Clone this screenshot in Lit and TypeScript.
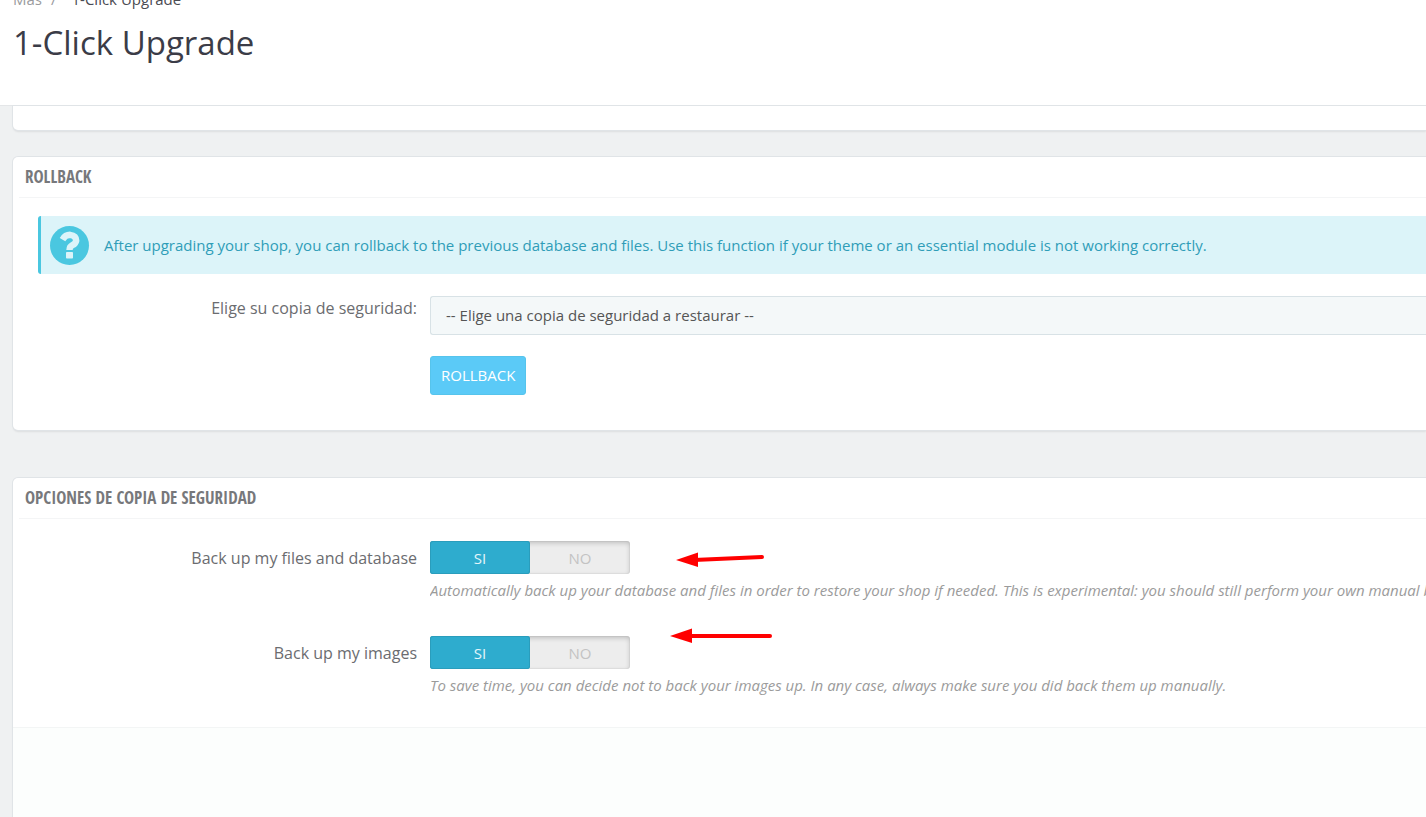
import { LitElement, html, css, svg } from "lit";
import { customElement, property } from "lit/decorators.js";

@customElement("yes-no-switch")
class YesNoSwitch extends LitElement {
  @property() name = "";
  @property() legend = "";

  static styles = css`
    :host {
      display: block;
    }
    .switch {
      box-sizing: border-box;
      display: grid;
      grid-template-columns: 1fr 1fr;
      width: 200px;
      height: 33px;
      margin: 0;
      padding: 0;
      border: 0;
      border-radius: 3px;
      background: #ededed;
      box-shadow: inset 0 2px 5px rgba(0, 0, 0, 0.2), inset 0 0 0 1px rgba(0, 0, 0, 0.03);
    }
    .sr {
      position: absolute;
      width: 1px;
      height: 1px;
      margin: 0;
      opacity: 0;
      overflow: hidden;
    }
    .option {
      display: flex;
      align-items: center;
      justify-content: center;
      border-radius: 3px;
      color: #c3c3c3;
      font-size: 15px;
      line-height: 20px;
      cursor: pointer;
    }
    .option:has(:checked) {
      background: #2eacce;
      color: #e4f5fa;
      box-shadow: inset 0 0 0 1px #2a9dbc;
    }
  `;

  render() {
    return html`
      <fieldset class="switch" aria-label=${this.legend}>
        <label class="option"><input class="sr" type="radio" name=${this.name} value="1" checked />SI</label>
        <label class="option"><input class="sr" type="radio" name=${this.name} value="0" />NO</label>
      </fieldset>
    `;
  }
}

@customElement("app-root")
class AppRoot extends LitElement {
  static styles = css`
    :host {
      display: flex;
      flex-direction: column;
      height: 100vh;
      overflow: hidden;
      background: #eff1f2;
      color: #6b6c70;
      font-family: "Open Sans", "Noto Sans", sans-serif;
      font-size: 16px;
      line-height: 24px;
    }
    .header {
      flex: none;
      padding: 0 13px 38px;
      border-bottom: 1px solid #e4e6e8;
      background: #fff;
    }
    .crumbs {
      display: flex;
      gap: 9px;
      margin-top: -11px;
      font-size: 15px;
      line-height: 20px;
      color: #9a9b9e;
    }
    .crumbs a {
      color: inherit;
      text-decoration: none;
    }
    .current {
      margin-left: 6px;
      color: #4a4b52;
    }
    .title {
      margin: 10px 0 0;
      color: #3b3c47;
      font-size: 33px;
      font-weight: 400;
      line-height: 48px;
    }
    .main {
      flex: 1;
      display: flex;
      flex-direction: column;
      padding-left: 13px;
      min-height: 0;
    }
    .panel {
      flex: none;
      border-radius: 5px 0 0 5px;
      background: #fff;
      box-shadow: 0 0 0 1px #e0e4e7, 0 2px 2px rgba(0, 0, 0, 0.08);
    }
    .previous {
      height: 24px;
      border-radius: 0 0 0 5px;
      margin-bottom: 27px;
    }
    .rollback {
      padding-bottom: 35px;
      margin-bottom: 48px;
    }
    .options {
      flex: 1 0 auto;
      display: flex;
      flex-direction: column;
      border-radius: 5px 0 0 0;
    }
    .heading {
      margin: 0 0 0 6px;
      padding: 8px 6px 9px;
      border-bottom: 1px solid #f4f5f6;
      color: #77787b;
      font-family: "Open Sans Condensed", "Open Sans", sans-serif;
      font-size: 17px;
      font-weight: 300;
      line-height: 23px;
    }
    .alert {
      display: flex;
      align-items: center;
      gap: 14px;
      box-sizing: border-box;
      min-height: 58px;
      margin: 18px 0 22px 25px;
      padding: 9px;
      border-left: 3px solid #4ac7e0;
      border-radius: 3px 0 0 3px;
      background: #dcf4f9;
      color: #2f9db8;
      font-size: 15px;
    }
    .question {
      flex: none;
      width: 40px;
      height: 40px;
    }
    .text {
      margin: 0;
    }
    .row {
      display: grid;
      grid-template-columns: 404px minmax(0, 1fr);
      column-gap: 13px;
    }
    .label {
      text-align: right;
    }
    .select {
      appearance: none;
      display: block;
      box-sizing: border-box;
      width: 100%;
      height: 39px;
      padding: 0 15px 2px;
      border: 1px solid #d8e2e6;
      border-right: 0;
      border-radius: 3px 0 0 3px;
      background: #f4f8f9;
      color: #555;
      font: inherit;
      font-size: 15px;
    }
    .button {
      height: 39px;
      margin-top: 21px;
      padding: 0 10px 2px;
      border: 1px solid #56c4ec;
      border-radius: 3px;
      background: #5bcaf7;
      color: #fff;
      font: inherit;
      font-size: 15px;
    }
    .field {
      position: relative;
      grid-column: 2;
    }
    .setting {
      margin-top: 22px;
    }
    .setting + .setting {
      margin-top: 34px;
    }
    .setting .label {
      padding-top: 5px;
    }
    .help {
      margin: 5px 0 0;
      color: #9b9b9b;
      font-size: 15px;
      font-style: italic;
      line-height: 23px;
      white-space: nowrap;
      overflow: hidden;
    }
    .arrow {
      position: absolute;
      top: -11px;
      left: 240px;
      width: 110px;
      height: 44px;
    }
    .footer {
      flex: 1;
      margin-top: 30px;
      border-top: 1px solid #f3f5f5;
      background: #fcfefd;
    }
    @media (max-width: 900px) {
      .row {
        grid-template-columns: 160px minmax(0, 1fr);
      }
    }
  `;

  private arrow(tip: number[], end: number[]) {
    const [x, y] = tip;
    return html`<svg class="arrow" viewBox="0 0 110 44" aria-hidden="true">
      ${svg`<path d="M${x + 18} ${y}L${end[0]} ${end[1]}" stroke="#f00" stroke-width="4" stroke-linecap="round" />
      <path d="M${x} ${y}L${x + 22} ${y - 7.5}V${y + 7}Z" fill="#f00" />`}
    </svg>`;
  }

  private setting(name: string, label: string, help: string, tip: number[], end: number[]) {
    return html`<div class="row setting">
      <span class="label">${label}</span>
      <div class="field">
        <yes-no-switch name=${name} legend=${label}></yes-no-switch>
        ${this.arrow(tip, end)}
        <p class="help">${help}</p>
      </div>
    </div>`;
  }

  render() {
    return html`
      <header class="header">
        <nav class="crumbs"><a href="#">Más</a><span>/</span><span class="current">1-Click Upgrade</span></nav>
        <h1 class="title">1-Click Upgrade</h1>
      </header>
      <main class="main">
        <div class="panel previous"></div>
        <section class="panel rollback">
          <h2 class="heading">ROLLBACK</h2>
          <div class="alert">
            <svg class="question" viewBox="0 0 40 40" aria-hidden="true">
              <circle cx="19.5" cy="20.5" r="19.5" fill="#4ac7e0" />
              <path d="M12.5 14.6Q15.3 9.8 20 9.8Q26.2 10.6 26.2 15.6Q25.7 18.6 22.4 20.2Q19.5 21.7 19.5 25" fill="none" stroke="#dcf4f9" stroke-width="6.4" />
              <rect x="16" y="27" width="7" height="6.6" rx="0.8" fill="#dcf4f9" />
            </svg>
            <p class="text">
              After upgrading your shop, you can rollback to the previous database and files. Use this function if your
              theme or an essential module is not working correctly.
            </p>
          </div>
          <div class="row">
            <label class="label" for="backup">Elige su copia de seguridad:</label>
            <div class="field">
              <select class="select" id="backup">
                <option>-- Elige una copia de seguridad a restaurar --</option>
              </select>
              <button class="button" type="button">ROLLBACK</button>
            </div>
          </div>
        </section>
        <section class="panel options">
          <h2 class="heading">OPCIONES DE COPIA DE SEGURIDAD</h2>
          ${this.setting(
            "files",
            "Back up my files and database",
            "Automatically back up your database and files in order to restore your shop if needed. This is experimental: you should still perform your own manual backup for safety.",
            [6, 30],
            [92, 27],
          )}
          ${this.setting(
            "images",
            "Back up my images",
            "To save time, you can decide not to back your images up. In any case, always make sure you did back them up manually.",
            [0, 11],
            [100, 11],
          )}
          <div class="footer"></div>
        </section>
      </main>
    `;
  }
}
